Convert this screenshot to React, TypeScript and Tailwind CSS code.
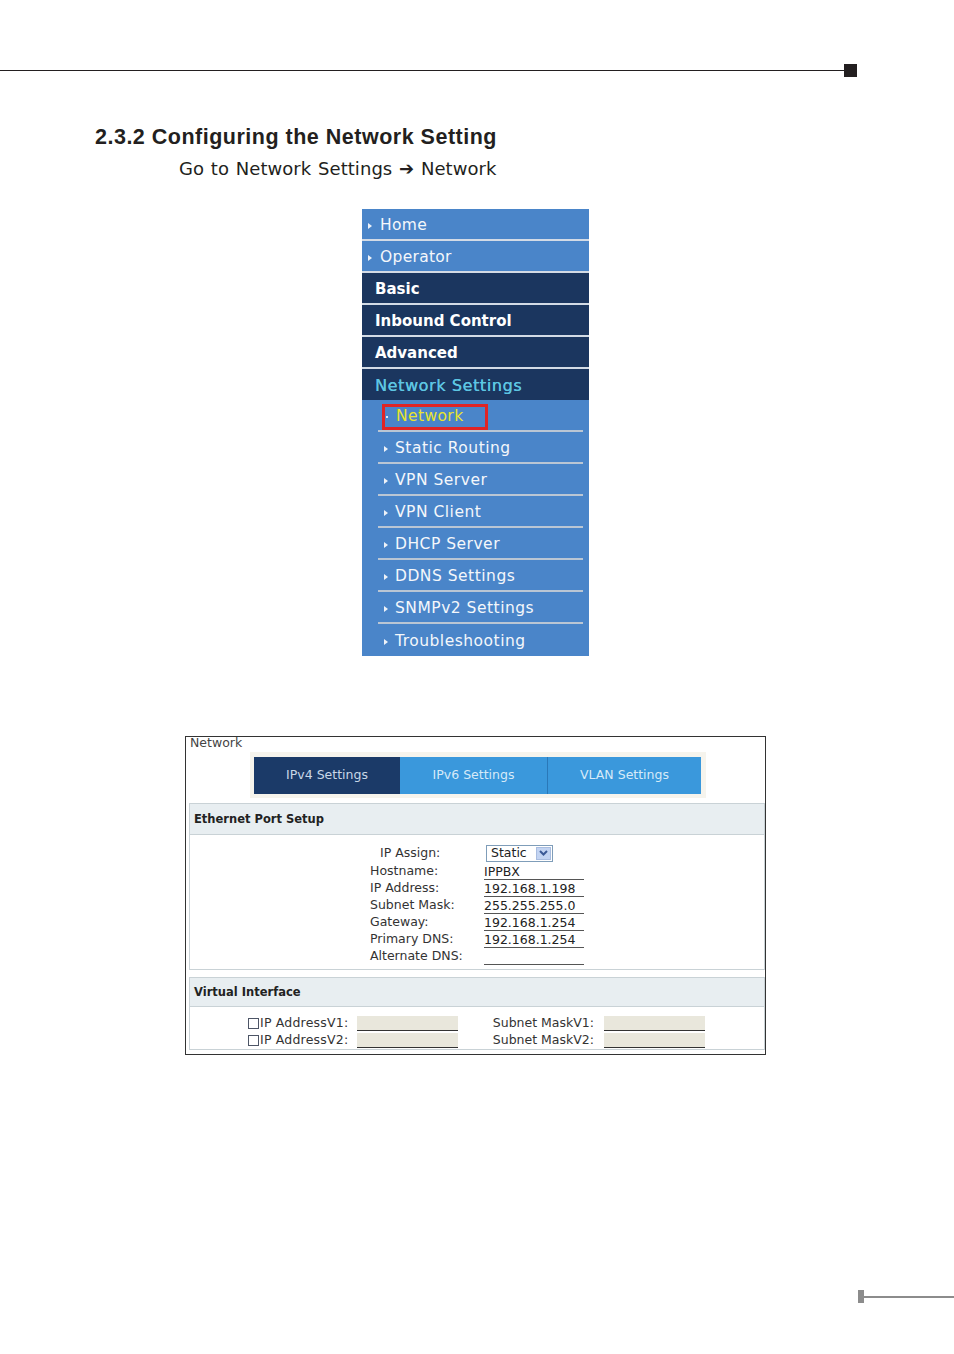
const dv = { fontFamily: '"DejaVu Sans", Verdana, sans-serif' };

const topLinks = ['Home', 'Operator'];
const groups = ['Basic', 'Inbound Control', 'Advanced'];
const subLinks = ['Static Routing', 'VPN Server', 'VPN Client', 'DHCP Server', 'DDNS Settings', 'SNMPv2 Settings', 'Troubleshooting'];

const ethRows = [
  { label: 'Hostname:', value: 'IPPBX' },
  { label: 'IP Address:', value: '192.168.1.198' },
  { label: 'Subnet Mask:', value: '255.255.255.0' },
  { label: 'Gateway:', value: '192.168.1.254' },
  { label: 'Primary DNS:', value: '192.168.1.254' },
  { label: 'Alternate DNS:', value: '' },
];

function Tri() {
  return <span className="inline-block w-0 h-0 border-y-[3px] border-y-transparent border-l-[4px] border-l-[#eef2f8]" />;
}

function Menu() {
  return (
    <div className="ml-[362px] w-[227px] mt-[28px]" style={dv}>
      {topLinks.map(t => (
        <div key={t} className="h-[32px] pt-[4px] border-b-2 border-[#d3dbe6] bg-[#4a85c9] flex items-center pl-[6px] gap-[8px] text-[15.5px] tracking-[0.3px] text-[#f4f7fb]">
          <Tri />{t}
        </div>
      ))}
      {groups.map(g => (
        <div key={g} className="h-[32px] pt-[2px] border-b-2 border-[#d3dbe6] bg-[#1b365f] flex items-center pl-[13px] text-[15px] font-bold text-white">{g}</div>
      ))}
      <div className="h-[31px] pt-[2px] bg-[#1b365f] flex items-center pl-[13px] text-[16px] tracking-[0.6px] text-[#5ec6e2]" style={{ textShadow: '0.3px 0 0 #5ec6e2' }}>Network Settings</div>

      {/* sub items */}
      <div className="bg-[#4a85c9] pl-[16px] pr-[6px]">
        <div className="h-[32px] border-b-2 border-[#bac6d4] flex items-center pt-[3px]">
          <div className="ml-[4px] w-[106px] h-[26px] border-[3px] border-[#e02424] flex items-center pl-[1px] gap-[8px] text-[15.5px] tracking-[0.4px] text-[#e8e42c]">
            <span className="w-[2px] h-[2px] bg-[#dde6f0]" />Network
          </div>
        </div>
        {subLinks.map((s, i) => (
          <div key={s} className={`h-[32px] pt-[3px] flex items-center pl-[6px] gap-[7px] text-[15.5px] tracking-[0.5px] text-[#f4f7fb] ${i < subLinks.length - 1 ? 'border-b-2 border-[#bac6d4]' : ''}`}>
            <Tri />{s}
          </div>
        ))}
      </div>
    </div>
  );
}

function Field({ value, w = 'w-[100px]' }: { value: string; w?: string }) {
  return <div className={`${w} h-[17px] border-b border-[#555] text-[12.5px] leading-[17px] text-[#222]`}>{value}</div>;
}

function Panel() {
  return (
    <div className="ml-[185px] w-[581px] mt-[80px] border border-[#333] bg-white" style={dv}>
      <div className="pl-[4px] text-[12.5px] leading-[12px] text-[#444]">Network</div>

      {/* tabs */}
      <div className="ml-[64px] mt-[3px] w-[456px] bg-[#f6f4ed] p-[4px]">
        <div className="flex h-[38px] text-[12.5px] pt-[1px]">
          <div className="w-[146px] bg-[#1b3a68] text-[#c9d7e7] flex items-center justify-center">IPv4 Settings</div>
          <div className="w-[148px] bg-[#3a98dc] text-[#d6eaf8] flex items-center justify-center border-r border-[#2a78b8]">IPv6 Settings</div>
          <div className="w-[153px] bg-[#3a98dc] text-[#d6eaf8] flex items-center justify-center">VLAN Settings</div>
        </div>
      </div>

      {/* ethernet */}
      <div className="ml-[3px] mt-[5px]">
        <div className="h-[32px] pt-[2px] bg-[#e8eef1] border border-[#c9d2d6] flex items-center pl-[4px] text-[11.5px] font-bold text-[#222]">Ethernet Port Setup</div>
        <div className="h-[135px] border-x border-b border-[#c9d2d6] pt-[8px] text-[12.5px] text-[#333]">
          <div className="flex h-[20px] items-center">
            <div className="w-[294px] pl-[190px]">IP Assign:</div>
            <div className="ml-[2px] w-[67px] h-[17px] border border-[#7f9db9] flex items-center justify-between pl-[4px] pr-[1px] text-[#222]">
              Static
              <span className="w-[15px] h-[13px] bg-[#c3d4f2] border border-[#a9bde0] flex items-center justify-center">
                <svg width="9" height="6" viewBox="0 0 9 6"><path d="M1 1l3.5 3.5L8 1" fill="none" stroke="#3b5a96" strokeWidth="2" /></svg>
              </span>
            </div>
          </div>
          {ethRows.map(r => (
            <div key={r.label} className="flex h-[17px] items-center">
              <div className="w-[294px] pl-[180px]">{r.label}</div>
              <Field value={r.value} />
            </div>
          ))}
        </div>
      </div>

      {/* virtual interface */}
      <div className="ml-[3px] mt-[7px] mb-[4px]">
        <div className="h-[30px] pt-[2px] bg-[#e8eef1] border border-[#c9d2d6] flex items-center pl-[4px] text-[11.5px] font-bold text-[#222]">Virtual Interface</div>
        <div className="h-[43px] border-x border-b border-[#c9d2d6] pt-[8px] flex text-[12.5px] text-[#333]">
          <div className="w-[268px] pl-[58px]">
            {['IP AddressV1:', 'IP AddressV2:'].map(l => (
              <div key={l} className="flex h-[17px] items-center">
                <span className="w-[11px] h-[11px] border border-[#4d5566] bg-white" />
                <span className="w-[98px] pl-[1px] tracking-[0.2px]">{l}</span>
                <span className="w-[101px] h-[15px] bg-[#e9e7dc] border-b border-[#333]" />
              </div>
            ))}
          </div>
          <div>
            {['Subnet MaskV1:', 'Subnet MaskV2:'].map(l => (
              <div key={l} className="flex h-[17px] items-center">
                <span className="w-[136px] text-right">{l}</span>
                <span className="ml-[10px] w-[101px] h-[15px] bg-[#e9e7dc] border-b border-[#333]" />
              </div>
            ))}
          </div>
        </div>
      </div>
    </div>
  );
}

export default function App() {
  return (
    <div className="w-[954px] min-h-[1354px] bg-white overflow-hidden">
      {/* header rule */}
      <div className="mt-[64px] h-[13px] flex items-center">
        <div className="w-[844px] h-[1.5px] bg-[#231f20]" />
        <div className="w-[13px] h-[13px] bg-[#231f20]" />
      </div>

      <h2 className="mt-[47px] pl-[95px] text-[21.5px] leading-[26px] font-bold tracking-[0.5px] text-[#231f20]" style={{ fontFamily: '"Liberation Sans", Arial, sans-serif' }}>
        2.3.2 Configuring the Network Setting
      </h2>
      <p className="mt-[7px] pl-[179px] text-[18px] leading-[24px] tracking-[0.05px] text-[#231f20]" style={{ ...dv, wordSpacing: '1px' }}>
        Go to Network Settings ➔ Network
      </p>

      <Menu />
      <Panel />

      {/* footer marker */}
      <div className="mt-[235px] ml-[858px] w-[96px] h-[13px] flex items-center">
        <div className="w-[6px] h-[13px] bg-[#8c8c8c]" />
        <div className="flex-1 h-[2px] bg-[#8c8c8c]" />
      </div>
    </div>
  );
}
